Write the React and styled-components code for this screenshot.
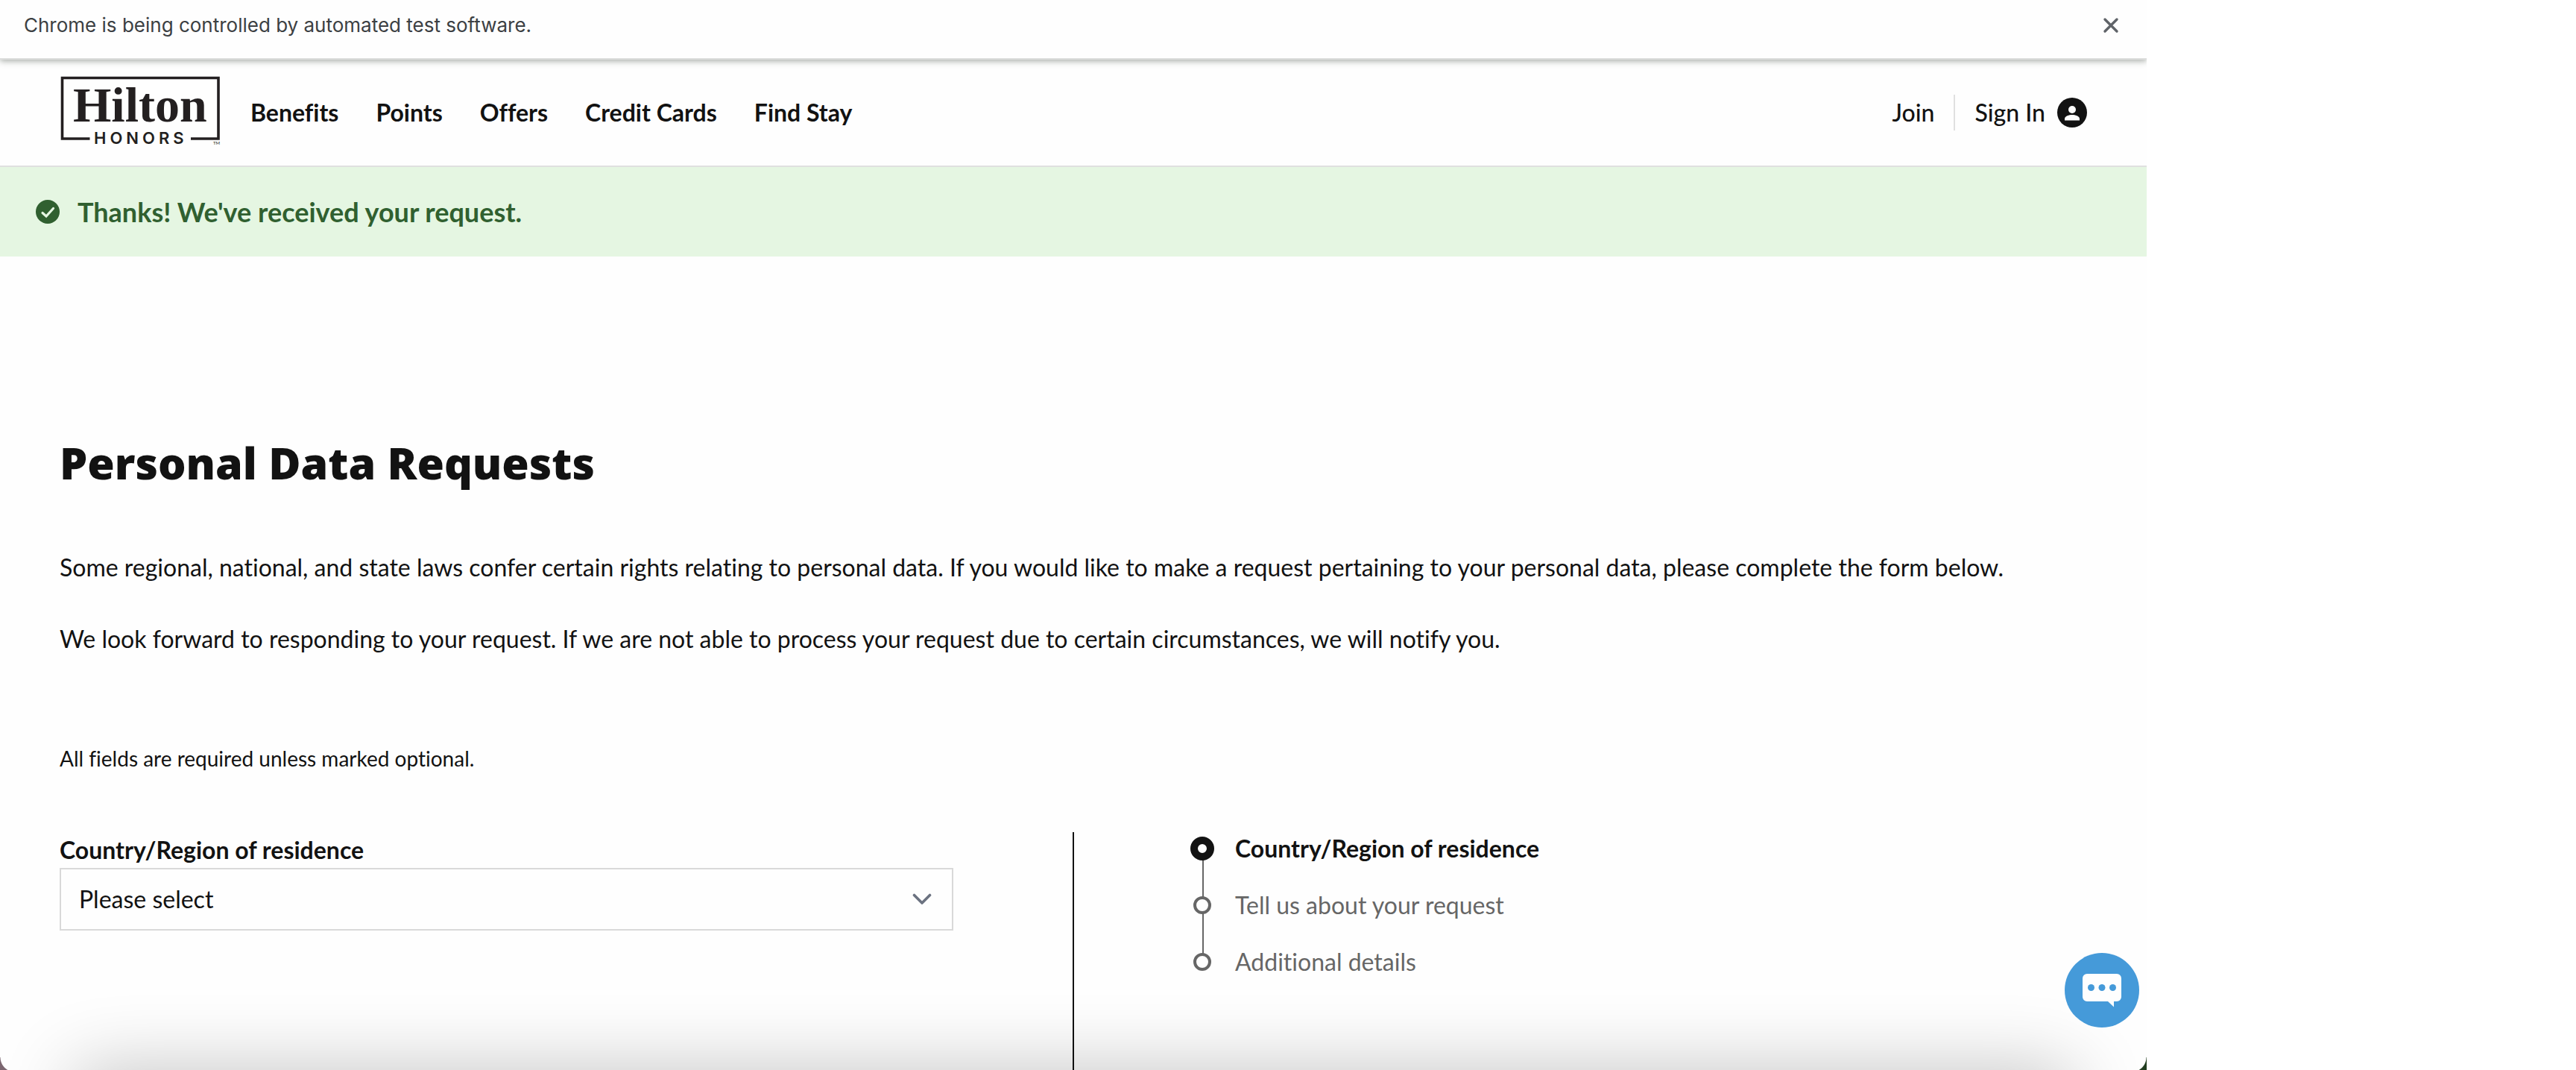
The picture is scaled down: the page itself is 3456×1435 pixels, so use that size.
import React from 'react';
import styled, { createGlobalStyle } from 'styled-components';

const Global = createGlobalStyle`
  * { box-sizing: border-box; }
  body {
    margin: 0;
    background: #ffffff;
    color: #121212;
    font-family: Lato, "Open Sans", sans-serif;
    font-size: 32px;
    line-height: 48px;
    font-variant-ligatures: none;
  }
  h1, p, ol, ul { margin: 0; padding: 0; }
  ol, ul { list-style: none; }
  button { border: 0; padding: 0; background: none; font: inherit; cursor: pointer; }
`;

const Window = styled.div`
  position: relative;
  display: flex;
  flex-direction: column;
  width: 83.3334%;
  height: 100vh;
  overflow: hidden;
  background: #fefefe;
`;

const InfoBar = styled.div`
  position: relative;
  z-index: 1;
  display: flex;
  align-items: center;
  justify-content: space-between;
  flex: none;
  height: 80px;
  padding: 0 36px 10px 32px;
  border-bottom: 2px solid #dcdddc;
  background: #fefefe;
  box-shadow: 0 2px 8px rgba(60, 70, 60, 0.45);
  color: #3c4043;
  font-family: Inter, sans-serif;
  font-size: 26px;
`;

const CloseButton = styled.button`
  display: flex;
  width: 24px;
  height: 24px;
`;

const Header = styled.header`
  display: flex;
  align-items: center;
  flex: none;
  height: 144px;
  padding: 0 80px;
  border-bottom: 2px solid #e0e0e0;
`;

const LogoLink = styled.a`
  display: flex;
  margin-right: 36px;
  color: #231f20;
`;

const Nav = styled.nav`
  display: flex;
  gap: 50px;
  flex: 1;
`;

const NavLink = styled.a`
  color: #121212;
  font-weight: ${(p) => (p.$strong ? 700 : 500)};
  text-decoration: none;
`;

const Account = styled.div`
  display: flex;
  align-items: center;
  gap: 26px;
`;

const Divider = styled.span`
  width: 2px;
  height: 48px;
  background: #e0e0e0;
`;

const SignIn = styled(NavLink)`
  display: flex;
  align-items: center;
  gap: 16px;
`;

const Banner = styled.div`
  display: flex;
  align-items: center;
  gap: 24px;
  flex: none;
  height: 120px;
  padding: 0 48px;
  background: #e5f6e2;
  color: #306030;
  font-size: 36px;
  font-weight: 700;
`;

const Main = styled.main`
  display: flex;
  flex-direction: column;
  flex: 1;
  padding: 236px 80px 0;
`;

const Title = styled.h1`
  font-family: "Open Sans", sans-serif;
  font-size: 59px;
  line-height: 80px;
  font-weight: 800;
`;

const Intro = styled.div`
  display: grid;
  gap: 48px;
  margin-top: 77px;
`;

const Note = styled.p`
  margin-top: 112px;
  font-size: 28px;
`;

const Columns = styled.div`
  display: grid;
  grid-template-columns: 1359fr 1361fr;
  flex: 1;
  margin-top: 75px;
`;

const Field = styled.form`
  display: flex;
  flex-direction: column;
  padding-right: 160px;
`;

const Label = styled.label`
  font-weight: 700;
`;

const SelectBox = styled.div`
  display: grid;
  align-items: center;
  > * { grid-area: 1 / 1; }
  > svg { justify-self: end; margin-right: 29px; pointer-events: none; }
`;

const Select = styled.select`
  width: 100%;
  height: 84px;
  padding: 0 24px;
  border: 2px solid #d9d9d9;
  border-radius: 0;
  appearance: none;
  background: #fefefe;
  color: #121212;
  font: inherit;
`;

const Side = styled.aside`
  padding-left: 156px;
  border-left: 2px solid #121212;
`;

const Steps = styled.ol`
  display: grid;
  grid-auto-rows: 76px;
`;

const Step = styled.li`
  display: flex;
  gap: 28px;
  color: ${(p) => (p.$current ? '#121212' : '#666666')};
  font-weight: ${(p) => (p.$current ? 700 : 400)};
  line-height: 44px;
`;

const Track = styled.span`
  position: relative;
  display: flex;
  justify-content: center;
  align-items: center;
  width: 32px;
  height: 44px;
  &::after {
    content: "";
    display: ${(p) => (p.$last ? 'none' : 'block')};
    position: absolute;
    top: 22px;
    left: 16px;
    width: 2px;
    height: 76px;
    background: #666666;
  }
`;

const Dot = styled.span`
  z-index: 1;
  width: ${(p) => (p.$current ? 32 : 24)}px;
  height: ${(p) => (p.$current ? 32 : 24)}px;
  border: ${(p) => (p.$current ? '10px solid #121212' : '4px solid #666666')};
  border-radius: 50%;
  background: #fefefe;
`;

const ChatButton = styled.button`
  position: absolute;
  z-index: 2;
  right: 10px;
  bottom: 57px;
  width: 100px;
  height: 100px;
  border-radius: 50%;
  background: #459ad9;
`;

const BottomShade = styled.div`
  position: absolute;
  top: 100%;
  left: 100px;
  right: 100px;
  height: 100px;
  box-shadow: 0 0 100px rgba(0, 0, 0, 0.24);
`;

const Corner = styled.div`
  position: absolute;
  bottom: 0;
  ${(p) => p.$side}: 0;
  width: 20px;
  height: 17px;
  background: radial-gradient(
    circle at ${(p) => (p.$side === 'left' ? '20px' : '0')} 0,
    transparent 19px,
    ${(p) => p.$color} 20px
  );
`;

function Logo() {
  return (
    <svg width="220" height="114" viewBox="80 94 220 114" role="img" aria-label="Hilton Honors">
      <path d="M120.500 186H83.500V104.500H293V186H256" fill="none" stroke="currentColor" strokeWidth="3.600" />
      <text x="98" y="163" fontFamily="Liberation Serif" fontSize="66" fontWeight="700" fill="currentColor">Hilton</text>
      <text x="126" y="193" fontFamily="Inter" fontSize="22" fontWeight="600" letterSpacing="5" fill="currentColor">HONORS</text>
      <text x="286" y="194" fontFamily="Lato" fontSize="6" fill="currentColor">TM</text>
    </svg>
  );
}

const navItems = ['Benefits', 'Points', 'Offers', 'Credit Cards', 'Find Stay'];
const steps = ['Country/Region of residence', 'Tell us about your request', 'Additional details'];

export default function App() {
  return (
    <>
      <Global />
      <Window>
        <InfoBar>
          <span>Chrome is being controlled by automated test software.</span>
          <CloseButton aria-label="Close">
            <svg width="24" height="24" viewBox="0 0 24 24" stroke="#5f6368" strokeWidth="3.400" strokeLinecap="round">
              <path d="M4 4l16 16M20 4L4 20" />
            </svg>
          </CloseButton>
        </InfoBar>
        <Header>
          <LogoLink href="#home"><Logo /></LogoLink>
          <Nav>
            {navItems.map((n) => <NavLink $strong key={n} href="#nav">{n}</NavLink>)}
          </Nav>
          <Account>
            <NavLink href="#join">Join</NavLink>
            <Divider />
            <SignIn href="#signin">
              Sign In
              <svg width="40" height="40" viewBox="0 0 40 40">
                <circle cx="20" cy="20" r="20" fill="#121212" />
                <circle cx="20" cy="16" r="5" fill="#fefefe" />
                <path d="M10 30.500v-2c0-4 6-5.500 10-5.500s10 1.500 10 5.500v2z" fill="#fefefe" />
              </svg>
            </SignIn>
          </Account>
        </Header>
        <Banner role="status">
          <svg width="32" height="32" viewBox="0 0 32 32">
            <circle cx="16" cy="16" r="16" fill="#306030" />
            <path d="M9 17.500l5 4.500 9.500-10.500" fill="none" stroke="#e5f6e2" strokeWidth="3.200" strokeLinecap="round" strokeLinejoin="miter" />
          </svg>
          <span>Thanks! We've received your request.</span>
        </Banner>
        <Main>
          <Title>Personal Data Requests</Title>
          <Intro>
            <p>Some regional, national, and state laws confer certain rights relating to personal data. If you would like to make a request pertaining to your personal data, please complete the form below.</p>
            <p>We look forward to responding to your request. If we are not able to process your request due to certain circumstances, we will notify you.</p>
          </Intro>
          <Note>All fields are required unless marked optional.</Note>
          <Columns>
            <Field>
              <Label htmlFor="country">Country/Region of residence</Label>
              <SelectBox>
                <Select id="country"><option>Please select</option></Select>
                <svg width="26" height="16" viewBox="0 0 26 16" fill="none" stroke="#6b7280" strokeWidth="3.600" strokeLinecap="round" strokeLinejoin="round">
                  <path d="M2.500 2.500L13 13 23.500 2.500" />
                </svg>
              </SelectBox>
            </Field>
            <Side>
              <Steps>
                {steps.map((s, i) => (
                  <Step key={s} $current={i === 0}>
                    <Track $last={i === 2}><Dot $current={i === 0} /></Track>
                    <span>{s}</span>
                  </Step>
                ))}
              </Steps>
            </Side>
          </Columns>
        </Main>
        <ChatButton aria-label="Open chat">
          <svg width="100" height="100" viewBox="0 0 100 100">
            <path d="M30 28h40a6 6 0 0 1 6 6v25a6 6 0 0 1-6 6h-4v7.500L58 65H30a6 6 0 0 1-6-6V34a6 6 0 0 1 6-6z" fill="#fefefe" />
            <circle cx="35.500" cy="46.500" r="4.500" fill="#459ad9" />
            <circle cx="50" cy="46.500" r="4.500" fill="#459ad9" />
            <circle cx="64.500" cy="46.500" r="4.500" fill="#459ad9" />
          </svg>
        </ChatButton>
        <BottomShade />
        <Corner $side="left" $color="#7b6670" />
        <Corner $side="right" $color="#223d20" />
      </Window>
    </>
  );
}
